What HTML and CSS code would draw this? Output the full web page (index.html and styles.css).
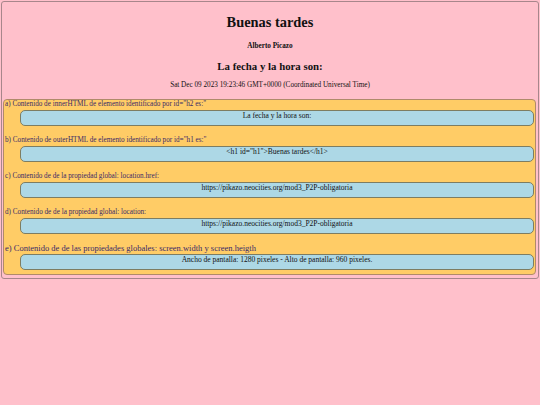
FILE: index.html
```html
<!DOCTYPE html>
<html lang="es">
<head>
<meta charset="utf-8">
<title>Buenas tardes</title>
<link rel="stylesheet" href="styles.css">
</head>
<body>
<div class="page">
  <h1 class="title">Buenas tardes</h1>
  <h4 class="author">Alberto Picazo</h4>
  <h2 class="subtitle">La fecha y la hora son:</h2>
  <p class="date">Sat Dec 09 2023 19:23:46 GMT+0000 (Coordinated Universal Time)</p>
  <div class="panel">
    <div class="item">
      <div class="label">a) Contenido de innerHTML de elemento identificado por id="h2 es:"</div>
      <div class="box">La fecha y la hora son:</div>
    </div>
    <div class="item">
      <div class="label">b) Contenido de outerHTML de elemento identificado por id="h1 es:"</div>
      <div class="box">&lt;h1 id="h1"&gt;Buenas tardes&lt;/h1&gt;</div>
    </div>
    <div class="item">
      <div class="label">c) Contenido de de la propiedad global: location.href:</div>
      <div class="box">https://pikazo.neocities.org/mod3_P2P-obligatoria</div>
    </div>
    <div class="item">
      <div class="label">d) Contenido de de la propiedad global: location:</div>
      <div class="box">https://pikazo.neocities.org/mod3_P2P-obligatoria</div>
    </div>
    <div class="item">
      <div class="label label-wide">e) Contenido de de las propiedades globales: screen.width y screen.heigth</div>
      <div class="box">Ancho de pantalla: 1280 pixeles - Alto de pantalla: 960 pixeles.</div>
    </div>
  </div>
</div>
</body>
</html>
```
FILE: styles.css
```css
html, body {
  margin: 0;
  padding: 0;
  background: #ffc0cb;
}
body {
  font-family: "Liberation Serif", "Times New Roman", serif;
  font-size: 7.2px;
  color: #111;
}
.page {
  margin: 1px;
  border: 1px solid #a8868b;
  border-radius: 3px;
  padding: 2px 0 1px 0;
}
.title {
  font-size: 14.4px;
  line-height: 16px;
  text-align: center;
  margin: 10px 0 12px 0;
}
.author {
  font-size: 7.2px;
  line-height: 8px;
  text-align: center;
  margin: 0 0 9.6px 0;
}
.subtitle {
  font-size: 10.8px;
  line-height: 12px;
  text-align: center;
  margin: 0 0 9px 0;
}
.date {
  line-height: 8px;
  text-align: center;
  margin: 0;
}
.panel {
  margin: 10px 2px 2px 1px;
  background: #ffcc66;
  border: 1px solid #b08a6a;
  border-radius: 4px;
}
.item {
  padding-bottom: 10px;
}
.item:last-child {
  padding-bottom: 4.5px;
}
.label {
  color: #3b2a66;
  line-height: 8px;
  padding-left: 1px;
}
.label-wide {
  font-size: 8.5px;
}
.box {
  margin: 2px 1px 0 16px;
  height: 14px;
  line-height: 9px;
  font-size: 7.5px;
  background: #add8e6;
  border: 1px solid #7d7d62;
  border-radius: 5px;
  text-align: center;
}
```
